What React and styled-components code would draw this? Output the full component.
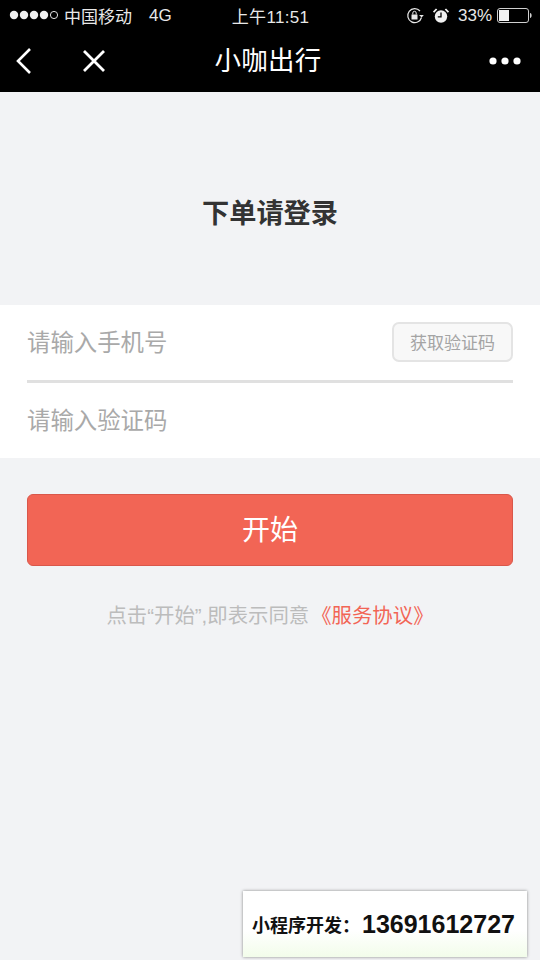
import React from 'react';
import styled, { createGlobalStyle } from 'styled-components';

const Global = createGlobalStyle`
  html, body { margin: 0; padding: 0; background: #f2f3f5; }
  * { box-sizing: border-box; }
`;
const cjk = `"Liberation Sans", "Noto Sans CJK SC", sans-serif`;

const Page = styled.div`
  position: relative; width: 540px; height: 960px; overflow: hidden;
  background: #f2f3f5; font-family: ${cjk};
`;
const Header = styled.header`background: #000; color: #fff; height: 92px; display: flex; flex-direction: column;`;
const StatusBar = styled.div`
  height: 30px; display: grid; grid-template-columns: 1fr auto 1fr; align-items: center;
  padding: 0 8px 0 9px; font-size: 17px; color: #e8e8e8;
`;
const StatusLeft = styled.div`display: flex; align-items: center;`;
const Carrier = styled.span`margin-left: 6px; padding-top: 1px; font-size: 17px;`;
const Network = styled.span`margin-left: 17px; padding-top: 1px; font-size: 17px;`;
const Clock = styled.div`font-size: 17px; padding-top: 1px; letter-spacing: .3px;`;
const StatusRight = styled.div`display: flex; align-items: center; justify-content: flex-end; padding-top: 1px;`;
const Percent = styled.span`font-size: 17px; margin: 0 5px 0 9px;`;
const NavBar = styled.nav`
  flex: 1; display: grid; grid-template-columns: 1fr auto 1fr; align-items: center; padding: 0 19px 0 15px;
`;
const NavLeft = styled.div`display: flex; align-items: center; gap: 49px; margin-top: -1px;`;
const NavTitle = styled.h1`margin: 0; font-size: 26.5px; font-weight: 400; letter-spacing: .2px; line-height: 1; color:#fff;`;
const NavRight = styled.div`display: flex; justify-content: flex-end; margin-top: -1px;`;

const Heading = styled.h2`
  margin: 0; height: 213px; display: flex; align-items: center; justify-content: center;
  font-size: 27.2px; line-height: 1; font-weight: 700; color: #333; padding-top: 31px;
`;
const Panel = styled.section`background: #fff; padding: 0 27px;`;
const Row = styled.div`
  height: ${p => p.$h}px; display: flex; align-items: center; justify-content: space-between;
  ${p => p.$divided && 'border-bottom: 3px solid #e0e0e0;'}
`;
const Placeholder = styled.span`font-size: 23.4px; color: #a9a9a9; line-height: 1; padding-top: 2px;`;
const CodeButton = styled.button`
  width: 121px; height: 40px; border: 2px solid #e4e4e4; border-radius: 7px; background: #f8f8f8;
  color: #a4a4a4; font: 400 17px ${cjk}; padding: 0 0 2px; margin-top: -1px;
`;
const StartButton = styled.button`
  display: block; width: 486px; height: 72px; margin: 36px 27px 0; background: #f26555;
  border: 1px solid #d9574a; border-radius: 6px; color: #fff; font: 400 28px ${cjk}; padding: 0 0 4px;
`;
const Agreement = styled.p`
  margin: 36px 0 0; text-align: center; font-size: 20.4px; line-height: 28px; color: #bcbcbc;
`;
const AgreementLink = styled.span`color: #f26555; margin-left: 2px;`;
const Badge = styled.div`
  position: absolute; left: 243px; top: 891px; width: 284px; height: 66px;
  background: linear-gradient(#fff 60%, #f2fdea); box-shadow: 0 0 3px rgba(0,0,0,.45);
  display: flex; align-items: center; padding: 0 0 0 9px; color: #111; font-weight: 700; white-space: nowrap;
`;
const BadgeLabel = styled.span`font-size: 18px;`;
const BadgePhone = styled.span`font-size: 25px; margin-left: 2px;`;

const SignalDots = () => (
  <svg width="49" height="10" viewBox="0 0 49 10">
    {[5, 15, 25, 35].map(x => <circle key={x} cx={x} cy="5" r="4.2" fill="#f0f0f0" />)}
    <circle cx="45" cy="5" r="3.6" fill="none" stroke="#e0e0e0" strokeWidth="1" />
  </svg>
);
const RotationLock = () => (
  <svg width="18" height="18" viewBox="0 0 18 18" fill="none" stroke="#e8e8e8">
    <path d="M15.5 10.5A7 7 0 1 1 14 4" strokeWidth="1.2" />
    <path d="M13 8l2.7 2.6L17.8 8" fill="#e8e8e8" stroke="none" />
    <rect x="5.5" y="7.5" width="6" height="5" fill="#e8e8e8" stroke="none" />
    <path d="M6.8 7.5V6a1.7 1.7 0 0 1 3.4 0v1.5" strokeWidth="1" />
  </svg>
);
const Alarm = () => (
  <svg width="16" height="16" viewBox="0 0 16 16" style={{ marginLeft: 9 }}>
    <circle cx="8" cy="8.5" r="6.2" fill="#f0f0f0" />
    <path d="M8 4.5v4.3H4.8" fill="none" stroke="#000" strokeWidth="1.3" />
    <path d="M.6 4.2L3.6 1M15.4 4.2L12.4 1" stroke="#f0f0f0" strokeWidth="1.8" />
  </svg>
);
const Battery = () => (
  <svg width="35" height="15" viewBox="0 0 35 15">
    <rect x=".5" y=".5" width="31" height="14" rx="2.5" fill="none" stroke="#d0d0d0" />
    <rect x="2" y="2" width="10" height="11" fill="#f2f2f2" />
    <path d="M33 5c1.2.3 1.6 1.2 1.6 2.5S34.2 9.7 33 10z" fill="#d0d0d0" />
  </svg>
);
const BackIcon = () => (
  <svg width="18" height="28" viewBox="0 0 18 28" fill="none" stroke="#fff" strokeWidth="2.6">
    <path d="M15 2L3 14l12 12" />
  </svg>
);
const CloseIcon = () => (
  <svg width="24" height="24" viewBox="0 0 24 24" fill="none" stroke="#fff" strokeWidth="2.8">
    <path d="M2 2l20 20M22 2L2 22" />
  </svg>
);
const MoreIcon = () => (
  <svg width="32" height="8" viewBox="0 0 32 8" fill="#fff">
    <circle cx="4" cy="4" r="3.6" /><circle cx="16" cy="4" r="3.6" /><circle cx="28" cy="4" r="3.6" />
  </svg>
);

export default function App() {
  return (
    <Page>
      <Global />
      <Header>
        <StatusBar>
          <StatusLeft>
            <SignalDots />
            <Carrier>中国移动</Carrier>
            <Network>4G</Network>
          </StatusLeft>
          <Clock>上午11:51</Clock>
          <StatusRight>
            <RotationLock />
            <Alarm />
            <Percent>33%</Percent>
            <Battery />
          </StatusRight>
        </StatusBar>
        <NavBar>
          <NavLeft><BackIcon /><CloseIcon /></NavLeft>
          <NavTitle>小咖出行</NavTitle>
          <NavRight><MoreIcon /></NavRight>
        </NavBar>
      </Header>
      <Heading>下单请登录</Heading>
      <Panel>
        <Row $h={78} $divided>
          <Placeholder>请输入手机号</Placeholder>
          <CodeButton>获取验证码</CodeButton>
        </Row>
        <Row $h={75}>
          <Placeholder>请输入验证码</Placeholder>
        </Row>
      </Panel>
      <StartButton>开始</StartButton>
      <Agreement>点击“开始”,即表示同意<AgreementLink>《服务协议》</AgreementLink></Agreement>
      <Badge>
        <BadgeLabel>小程序开发：</BadgeLabel>
        <BadgePhone>13691612727</BadgePhone>
      </Badge>
    </Page>
  );
}
